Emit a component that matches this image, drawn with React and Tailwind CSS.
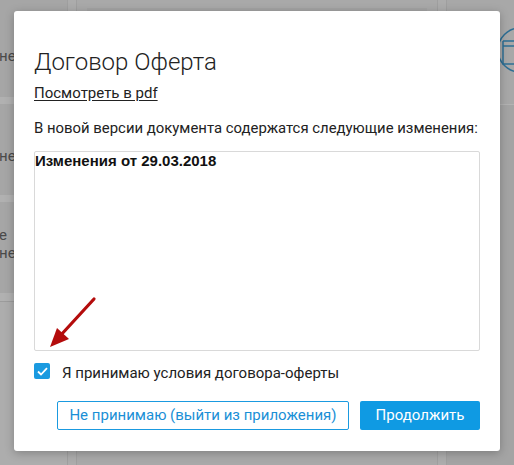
import { useState } from 'react'

// Offer-contract consent dialog shown over the (dimmed) app screen.

function BackdropPage() {
  return (
    <div className="relative h-[465px] w-[514px] overflow-hidden bg-[#a9a9a9] font-['Roboto',sans-serif] text-[#4a4a4a]">
      <div className="flex h-full">
        {/* left list column */}
        <div className="flex w-[67px] flex-col bg-[#a6a6a6] text-[15px] leading-[18px]">
          <div className="flex h-[97px] items-center pt-[14px]">
            <span className="-ml-[1px]">не</span>
          </div>
          <div className="h-[7px] bg-[#b1b1b1]" />
          <div className="flex h-[91px] items-center pt-[12px]">
            <span className="-ml-[1px]">не</span>
          </div>
          <div className="h-[7px] bg-[#b1b1b1]" />
          <div className="flex h-[91px] flex-col justify-center pb-[8px]">
            <span className="-ml-[1px]">е</span>
            <span className="-ml-[1px]">не</span>
          </div>
          <div className="h-[8px] bg-[#b1b1b1]" />
          <div className="flex-1 border-t border-[#9c9c9c] bg-[#adadad]" />
        </div>
        <div className="w-[10px] border-x border-[#9f9f9f] bg-[#acacac]" />
        {/* middle */}
        <div className="flex flex-1 flex-col px-[10px]">
          <div className="mt-[8px] h-[20px] bg-[#a3a3a3]" />
        </div>
        <div className="w-[10px] border-x border-[#9f9f9f] bg-[#acacac]" />
        {/* right column */}
        <div className="flex w-[67px] flex-col bg-[#a8a8a8]">
          <div className="relative h-[105px] border-b border-[#b3b3b3]">
            <svg className="absolute left-[45px] top-[27px]" width="50" height="48" viewBox="0 0 50 48" fill="none" stroke="#2d6f95" strokeWidth="1.5">
              <circle cx="28" cy="23" r="22" />
              <path d="M11 14 H40 M11 19 H40 M11 14 V37 H40" />
            </svg>
          </div>
          <div className="flex-1 bg-[#a4a4a4]" />
        </div>
      </div>
    </div>
  )
}

function RedArrow() {
  return (
    <svg className="pointer-events-none absolute left-[30px] top-[292px]" width="70" height="62" viewBox="0 0 70 62" fill="none">
      <path d="M64 7 L30 44" stroke="#b40c0c" strokeWidth="3.2" strokeLinecap="round" />
      <path d="M20 55 L27 36 L39 47 Z" fill="#b40c0c" />
    </svg>
  )
}

export default function App() {
  const [accepted, setAccepted] = useState(true)

  return (
    <div className="relative h-[465px] w-[514px] overflow-hidden">
      <BackdropPage />

      <div className="absolute left-[14px] top-[11px] flex h-[440px] w-[486px] flex-col rounded-[3px] bg-white px-[20px] font-['Roboto',sans-serif] text-[#222] shadow-[0_2px_10px_rgba(0,0,0,0.25)]">
        <h2 className="mt-[37px] text-[24px] font-light leading-[28px]">Договор Оферта</h2>

        <a className="mt-[8px] self-start text-[15px] leading-[18px] text-[#222] underline underline-offset-2">
          Посмотреть в pdf
        </a>

        <p className="mt-[17px] whitespace-nowrap text-[14.9px] leading-[18px]">
          В новой версии документа содержатся следующие изменения:
        </p>

        <div className="mt-[14px] h-[200px] rounded-[2px] border border-[#d9d9d9] bg-white">
          <p className="font-['Liberation_Sans',Arial,sans-serif] text-[15px] font-bold leading-[18px] text-[#111]">
            Изменения от 29.03.2018
          </p>
        </div>

        <label className="mt-[9px] flex items-start gap-[12px] text-[15px] leading-[18px]">
          <button
            type="button"
            onClick={() => setAccepted(!accepted)}
            className={`mt-[3px] flex h-[16px] w-[16px] items-center justify-center rounded-[2px] ${accepted ? 'bg-[#1a9ae0]' : 'border border-[#999] bg-white'}`}
          >
            {accepted && (
              <svg width="11" height="9" viewBox="0 0 11 9" fill="none" stroke="white" strokeWidth="1.8">
                <path d="M1 4.5 L4 7.5 L10 1.2" />
              </svg>
            )}
          </button>
          <span className="mt-[4px]">Я принимаю условия договора-оферты</span>
        </label>

        <div className="mt-[19px] flex justify-end gap-[11px]">
          <button
            type="button"
            className="h-[29px] w-[292px] rounded-[2px] border border-[#1a9ae0] bg-white text-[15px] text-[#1a8fd6]"
          >
            Не принимаю (выйти из приложения)
          </button>
          <button
            type="button"
            className="h-[29px] w-[120px] rounded-[2px] bg-[#0f9ae3] text-[15px] text-white"
          >
            Продолжить
          </button>
        </div>
      </div>

      <RedArrow />
    </div>
  )
}
